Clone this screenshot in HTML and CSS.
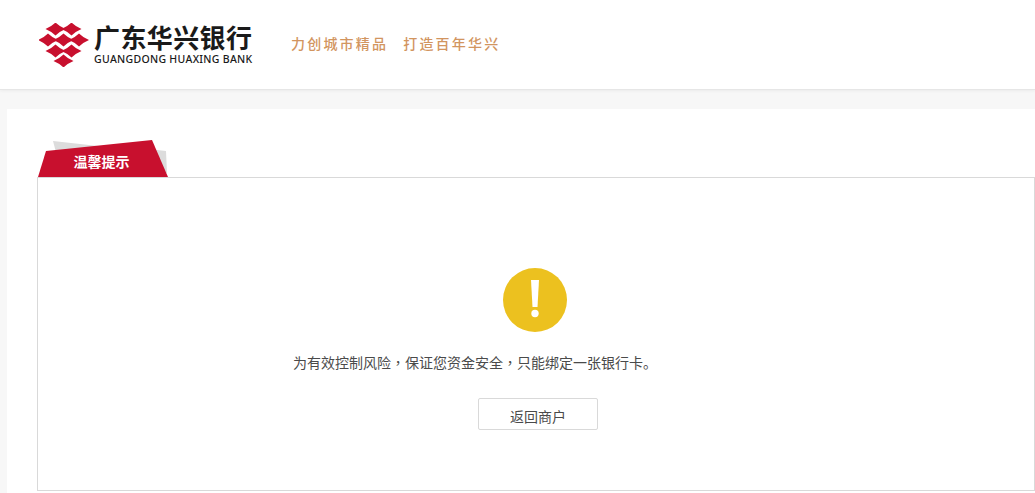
FILE: index.html
```html
<!DOCTYPE html>
<html lang="zh-CN">
<head>
    <meta charset="UTF-8">
    <title>广东华兴银行</title>
    <link rel="stylesheet" href="styles.css">
</head>
<body>

    <!-- header -->
    <header class="top-bar">
        <svg class="logo-mark" width="50" height="44" viewBox="0 0 50 44">
            <defs>
                <path id="star" d="M-10 0Q-4 -2.500 0 -6.500Q4 -2.500 10 0Q4 2.500 0 6.500Q-4 2.500 -10 0z"/>
            </defs>
            <g fill="#c8102e">
                <use href="#star" x="16.500" y="6"/>
                <use href="#star" x="32.500" y="6"/>
                <use href="#star" x="9" y="17"/>
                <use href="#star" x="24.500" y="17"/>
                <use href="#star" x="40" y="17"/>
                <use href="#star" x="16.500" y="28"/>
                <use href="#star" x="32.500" y="28"/>
                <use href="#star" x="24.500" y="38"/>
            </g>
        </svg>
        <div class="logo-text">
            <div class="logo-cn">广东华兴银行</div>
            <div class="logo-en">GUANGDONG HUAXING BANK</div>
        </div>
        <div class="slogan">力创城市精品<span class="slogan-gap"></span>打造百年华兴</div>
    </header>

    <!-- main panel -->
    <main class="panel">
        <div class="tab">
            <svg class="tab-bg" width="131" height="38" viewBox="0 0 131 38">
                <path d="M15 1L60 6 119 10 128 11 129 33 20 20z" fill="#dcdcdc"/>
                <path d="M0 37L8 11 114 0 130 37z" fill="#c8102e"/>
            </svg>
            <span class="tab-label">温馨提示</span>
        </div>
        <section class="notice-box">
            <div class="warn-icon">
                <svg width="64" height="64" viewBox="0 0 64 64">
                    <circle cx="32" cy="32" r="32" fill="#ecc11f"/>
                    <path d="M28 12h8l-1.500 27h-5z" fill="#fff"/>
                    <circle cx="32" cy="45.500" r="3.700" fill="#fff"/>
                </svg>
            </div>
            <p class="notice-msg">为有效控制风险<span class="comma" lang="zh-TW">，</span>保证您资金安全<span class="comma" lang="zh-TW">，</span>只能绑定一张银行卡。</p>
            <div class="notice-actions">
                <a class="back-btn" href="#">返回商户</a>
            </div>
        </section>
    </main>

</body>
</html>
```

FILE: styles.css
```css
* {
    margin: 0;
    padding: 0;
    box-sizing: border-box;
}

html, body {
    height: 100%;
    overflow: hidden;
}

body {
    background-color: #f7f7f7;
    font-family: "Liberation Sans", "Noto Sans CJK SC", sans-serif;
    color: #333;
}

/* header */
.top-bar {
    display: flex;
    align-items: flex-start;
    height: 90px;
    padding: 22px 0 0 39px;
    background-color: #fff;
    border-bottom: 1px solid #e6e6e6;
    box-shadow: 0 1px 3px rgba(0, 0, 0, 0.05);
}

.logo-mark {
    flex: none;
    margin-top: 1px;
}

.logo-text {
    margin-left: 5px;
    width: 160px;
    color: #1a1a1a;
}

.logo-cn {
    font-family: "Noto Sans CJK SC", sans-serif;
    font-size: 26px;
    font-weight: 700;
    line-height: 30px;
    letter-spacing: 0.4px;
    white-space: nowrap;
}

.logo-en {
    margin-top: 1px;
    font-family: "Noto Sans", sans-serif;
    font-size: 10.500px;
    font-weight: 500;
    line-height: 13px;
    letter-spacing: 0.3px;
    white-space: nowrap;
}

.slogan {
    display: flex;
    margin: 11px 0 0 37px;
    font-family: "Noto Sans CJK SC", sans-serif;
    font-size: 14px;
    font-weight: 500;
    line-height: 20px;
    letter-spacing: 2.200px;
    color: #d2955f;
    white-space: nowrap;
}

.slogan-gap {
    width: 15px;
}

/* panel */
.panel {
    margin: 19px 0 0 7px;
    height: 400px;
    padding: 31px 0 0 30px;
    background-color: #fff;
}

.tab {
    position: relative;
    display: flex;
    align-items: center;
    justify-content: center;
    width: 131px;
    height: 37px;
    padding: 4px 2px 0 0;
}

.tab-bg {
    position: absolute;
    left: 1px;
    top: 0;
}

.tab-label {
    position: relative;
    font-family: "Noto Sans CJK SC", sans-serif;
    font-size: 14px;
    font-weight: 700;
    color: #fff;
}

.notice-box {
    width: 998px;
    height: 314px;
    padding-top: 90px;
    border: 1px solid #d9d9d9;
}

.warn-icon {
    display: flex;
    justify-content: center;
    height: 64px;
    padding-right: 2px;
}

.notice-msg {
    margin-top: 20px;
    padding-left: 255px;
    font-family: "Noto Sans CJK SC", sans-serif;
    font-size: 14px;
    line-height: 20px;
    color: #4a4a4a;
}

/* 逗号居中显示 */
.comma {
    font-family: "Noto Sans CJK TC", sans-serif;
}

.notice-actions {
    margin-top: 26px;
    padding-left: 440px;
}

.back-btn {
    display: block;
    width: 120px;
    height: 32px;
    border: 1px solid #d9d9d9;
    border-radius: 2px;
    font-family: "Noto Sans CJK SC", sans-serif;
    font-size: 14px;
    line-height: 35px;
    text-align: center;
    text-decoration: none;
    color: #4a4a4a;
}
```
